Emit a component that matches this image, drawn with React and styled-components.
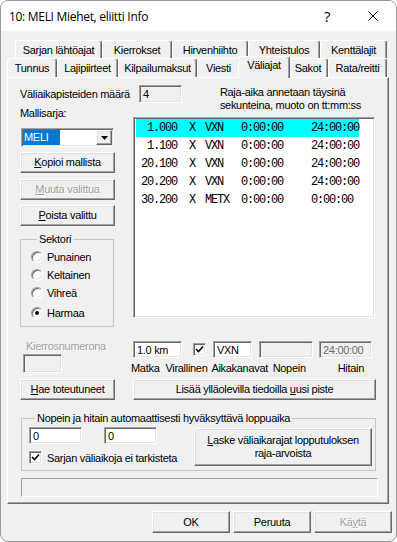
import React from 'react';
import styled, { createGlobalStyle, css } from 'styled-components';

const GlobalStyle = createGlobalStyle`
  html, body { margin: 0; padding: 0; background: #ffffff; }
  body { font-family: "Liberation Sans", Arial, sans-serif; font-size: 11px; color: #000; }
  * { box-sizing: border-box; }
`;

const sunken = css`
  border: 1px solid;
  border-color: #a0a0a0 #ffffff #ffffff #a0a0a0;
  box-shadow: inset 1px 1px 0 #696969, inset -1px -1px 0 #e3e3e3;
`;

const raised = css`
  border: 1px solid;
  border-color: #ffffff #696969 #696969 #ffffff;
  box-shadow: inset -1px -1px 0 #a0a0a0, inset 1px 1px 0 #e3e3e3;
`;

const Window = styled.div`
  width: 397px;
  height: 542px;
  border: 1px solid #9a9a9a;
  border-radius: 8px;
  overflow: hidden;
  background: #f0f0f0;
  display: flex;
  flex-direction: column;
  letter-spacing: -0.3px;
`;

const TitleBar = styled.div`
  height: 30px;
  background: #ffffff;
  display: flex;
  align-items: center;
  padding-left: 8px;
`;

const TitleText = styled.div`
  font-family: "Segoe UI", "Open Sans", "Noto Sans", sans-serif;
  font-size: 12px;
  flex: 1;
`;

const CaptionButton = styled.div`
  width: 46px;
  height: 30px;
  display: flex;
  align-items: center;
  justify-content: center;
  font-family: "Open Sans", "Noto Sans", sans-serif;
  font-size: 15px;
  font-weight: 400;
`;

const Body = styled.div`
  flex: 1;
  padding: 9px 0 0 6px;
  display: flex;
  flex-direction: column;
`;

const TabRow = styled.div`
  display: flex;
  margin-left: ${p => p.$indent}px;
  height: ${p => p.$h}px;
  position: relative;
  z-index: ${p => p.$z};
`;

const Tab = styled.div`
  width: ${p => p.$w}px;
  height: ${p => p.$h}px;
  border-top: 1px solid #ffffff;
  border-left: 1px solid #ffffff;
  border-right: 1px solid #696969;
  box-shadow: inset -1px 0 0 #a0a0a0;
  border-radius: 3px 3px 0 0;
  background: #f0f0f0;
  display: flex;
  justify-content: center;
  align-items: center;
  white-space: nowrap;
  ${p => p.$selected && css`
    width: ${p.$w + 4}px;
    height: ${p.$h + 3}px;
    margin: -2px -2px -1px;
    align-items: flex-start;
    padding-top: 2px;
    line-height: 13px;
    position: relative;
    z-index: 2;
  `}
`;

const Panel = styled.div`
  width: 382px;
  height: 427px;
  border: 1px solid;
  border-color: #ffffff #696969 #696969 #ffffff;
  box-shadow: inset -1px -1px 0 #a0a0a0;
  padding: 7px 0 0 12px;
  display: flex;
  flex-direction: column;
`;

const MainGrid = styled.div`
  display: grid;
  grid-template-columns: 113px 243px;
  align-items: start;
`;

const CountRow = styled.div`
  grid-column: 1 / span 2;
  display: flex;
  align-items: flex-start;
  height: 22px;
`;

const Text = styled.div`
  line-height: ${p => p.$lh || 13}px;
  margin-top: ${p => p.$mt || 0}px;
  margin-left: ${p => p.$ml || 0}px;
  white-space: nowrap;
  color: ${p => (p.$disabled ? '#a0a0a0' : '#000')};
  ${p => p.$disabled && 'text-shadow: 1px 1px 0 #fff;'}
`;

const TextBox = styled.div`
  ${sunken};
  width: ${p => p.$w}px;
  height: ${p => p.$h}px;
  margin-top: ${p => p.$mt || 0}px;
  margin-left: ${p => p.$ml || 0}px;
  background: ${p => (p.$readonly ? '#f0f0f0' : '#ffffff')};
  color: ${p => (p.$grey ? '#6d6d6d' : '#000')};
  padding: 0 0 0 3px;
  display: flex;
  align-items: center;
  white-space: nowrap;
  flex-shrink: 0;
`;

const LeftStack = styled.div`
  display: flex;
  flex-direction: column;
  align-items: flex-start;
  margin-top: ${p => p.$mt || 0}px;
`;

const RightStack = styled.div`
  margin-top: ${p => p.$mt || 0}px;
`;

const ComboBox = styled.div`
  ${sunken};
  background: #ffffff;
  width: 93px;
  height: 19px;
  margin: 8px 0 0 1px;
  padding: 1px;
  display: flex;
  align-items: center;
`;

const Selection = styled.span`
  width: 37px;
  height: 15px;
  background: #0078d7;
  color: #ffffff;
  padding-left: 1px;
  line-height: 15px;
`;

const DropButton = styled.div`
  ${raised};
  background: #f0f0f0;
  width: 16px;
  height: 15px;
  margin-left: auto;
  display: flex;
  align-items: center;
  justify-content: center;
`;

const Button = styled.div`
  ${raised};
  background: #f0f0f0;
  width: ${p => p.$w}px;
  height: ${p => p.$h || 21}px;
  margin-top: ${p => p.$mt || 0}px;
  margin-left: ${p => (p.$push ? 'auto' : `${p.$ml || 0}px`)};
  display: flex;
  align-items: center;
  justify-content: center;
  text-align: center;
  line-height: 13px;
  white-space: nowrap;
  flex-shrink: 0;
  color: ${p => (p.$disabled ? '#a0a0a0' : '#000')};
  ${p => p.$disabled && 'text-shadow: 1px 1px 0 #fff;'}
`;

const U = styled.span`
  text-decoration: underline;
  text-underline-offset: 1px;
`;

const GroupBox = styled.fieldset`
  margin: ${p => p.$mt || 0}px 0 0 ${p => p.$ml || 0}px;
  padding: ${p => p.$pad};
  width: ${p => p.$w}px;
  border: 1px solid #c6c6c6;
  min-width: 0;
`;

const Legend = styled.legend`
  padding: 0 2px;
  margin-left: 6px;
  line-height: 13px;
  white-space: nowrap;
`;

const RadioRow = styled.div`
  display: flex;
  align-items: center;
  height: 18px;
  margin-top: ${p => p.$mt || 0}px;
  gap: 4px;
`;

const RadioCircle = styled.span`
  width: 12px;
  height: 12px;
  border-radius: 50%;
  border: 1px solid;
  border-color: #a0a0a0 #ffffff #ffffff #a0a0a0;
  box-shadow: inset 1px 1px 0 #696969, inset -1px -1px 0 #e3e3e3;
  background: #ffffff;
  display: flex;
  align-items: center;
  justify-content: center;
  &::after {
    content: '';
    width: 4px;
    height: 4px;
    border-radius: 50%;
    background: ${p => (p.$checked ? '#000' : 'transparent')};
  }
`;

const ListBox = styled.div`
  ${sunken};
  background: #ffffff;
  width: 242px;
  height: 201px;
  margin-top: 10px;
  padding: 1px 0 0 2px;
  font-family: "Liberation Mono", "Courier New", monospace;
  font-size: 12px;
  letter-spacing: -1.2px;
`;

const ListRow = styled.div`
  display: flex;
  width: 223px;
  height: 18px;
  align-items: center;
  background: ${p => (p.$selected ? '#00ffff' : 'transparent')};
`;

const Cell = styled.div`
  width: ${p => p.$w}px;
  padding-left: ${p => p.$pl || 0}px;
  text-align: ${p => p.$align || 'left'};
  white-space: pre;
`;

const FieldsRow = styled.div`
  display: flex;
  align-items: center;
  margin-top: 1px;
`;

const CheckBox = styled.span`
  width: 13px;
  height: 13px;
  margin-left: ${p => p.$ml || 0}px;
  border: 1px solid;
  border-color: #a0a0a0 #ffffff #ffffff #a0a0a0;
  box-shadow: inset 1px 1px 0 #696969, inset -1px -1px 0 #e3e3e3;
  background: #ffffff;
  display: flex;
  align-items: center;
  justify-content: center;
  flex-shrink: 0;
`;

const LabelsRow = styled.div`
  display: flex;
  margin: 4px 0 0 -2px;
  line-height: 12px;
`;

const FieldLabel = styled.div`
  width: ${p => p.$w}px;
  white-space: nowrap;
`;

const GroupContent = styled.div`
  display: flex;
  align-items: flex-start;
`;

const CheckRow = styled.div`
  display: flex;
  align-items: center;
  gap: 5px;
  margin-top: 7px;
  white-space: nowrap;
`;

const InputsRow = styled.div`
  display: flex;
`;

const StatusBox = styled.div`
  width: 357px;
  height: 19px;
  margin: 7px 0 0 1px;
  border: 1px solid;
  border-color: #a0a0a0 #ffffff #ffffff #a0a0a0;
`;

const Footer = styled.div`
  display: flex;
  justify-content: flex-end;
  gap: 3px;
  margin-top: 7px;
  padding-right: 4px;
`;

const Check = () => (
  <svg width="9" height="9" viewBox="0 0 9 9">
    <path d="M1 4 L3.5 6.5 L8 1.5" stroke="#000" strokeWidth="1.6" fill="none" />
  </svg>
);

const row1 = [
  { label: 'Sarjan lähtöajat', w: 87 },
  { label: 'Kierrokset', w: 70 },
  { label: 'Hirvenhiihto', w: 76 },
  { label: 'Yhteistulos', w: 72 },
  { label: 'Kenttälajit', w: 67 },
];

const row2 = [
  { label: 'Tunnus', w: 50 },
  { label: 'Lajipiirteet', w: 61 },
  { label: 'Kilpailumaksut', w: 79 },
  { label: 'Viesti', w: 43 },
  { label: 'Väliajat', w: 48, selected: true },
  { label: 'Sakot', w: 40 },
  { label: 'Rata/reitti', w: 59 },
];

const points = [
  { km: '1.000', ch: 'VXN', fast: '0:00:00', slow: '24:00:00', selected: true },
  { km: '1.100', ch: 'VXN', fast: '0:00:00', slow: '24:00:00' },
  { km: '20.100', ch: 'VXN', fast: '0:00:00', slow: '24:00:00' },
  { km: '20.200', ch: 'VXN', fast: '0:00:00', slow: '24:00:00' },
  { km: '30.200', ch: 'METX', fast: '0:00:00', slow: '0:00:00' },
];

const sectors = [
  { label: 'Punainen' },
  { label: 'Keltainen' },
  { label: 'Vihreä' },
  { label: 'Harmaa', checked: true, mt: 2 },
];

export default function App() {
  return (
    <>
      <GlobalStyle />
      <Window>
        <TitleBar>
          <TitleText>10: MELI Miehet, eliitti Info</TitleText>
          <CaptionButton>?</CaptionButton>
          <CaptionButton>
            <svg width="10" height="10" viewBox="0 0 10 10">
              <path d="M0.5 0.5 L9.5 9.5 M9.5 0.5 L0.5 9.5" stroke="#000" strokeWidth="1" />
            </svg>
          </CaptionButton>
        </TitleBar>
        <Body>
          <TabRow $indent={8} $h={18} $z={1}>
            {row1.map(t => (
              <Tab key={t.label} $w={t.w} $h={18}>{t.label}</Tab>
            ))}
          </TabRow>
          <TabRow $indent={0} $h={19} $z={2}>
            {row2.map(t => (
              <Tab key={t.label} $w={t.w} $h={19} $selected={t.selected}>{t.label}</Tab>
            ))}
          </TabRow>
          <Panel>
            <MainGrid>
              <CountRow>
                <Text $lh={18}>Väliaikapisteiden määrä</Text>
                <TextBox $w={43} $h={18} $ml={9} $readonly>4</TextBox>
                <Text $mt={1} $ml={38}>
                  Raja-aika annetaan täysinä
                  <br />
                  sekunteina, muoto on tt:mm:ss
                </Text>
              </CountRow>

              <LeftStack>
                <Text>Mallisarja:</Text>
                <ComboBox>
                  <Selection>MELI</Selection>
                  <DropButton>
                    <svg width="7" height="4" viewBox="0 0 7 4">
                      <path d="M0 0 L7 0 L3.5 4 Z" fill="#000" />
                    </svg>
                  </DropButton>
                </ComboBox>
                <Button $w={95} $mt={5}><span><U>K</U>opioi mallista</span></Button>
                <Button $w={95} $mt={6} $disabled><span><U>M</U>uuta valittua</span></Button>
                <Button $w={95} $mt={5}><span><U>P</U>oista valittu</span></Button>
                <GroupBox $w={94} $mt={7} $pad="2px 0 4px 10px">
                  <Legend>Sektori</Legend>
                  {sectors.map(s => (
                    <RadioRow key={s.label} $mt={s.mt}>
                      <RadioCircle $checked={s.checked} />
                      <span>{s.label}</span>
                    </RadioRow>
                  ))}
                </GroupBox>
              </LeftStack>

              <ListBox>
                {points.map(p => (
                  <ListRow key={p.km} $selected={p.selected}>
                    <Cell $w={41} $align="right">{p.km}</Cell>
                    <Cell $w={28} $pl={12}>X</Cell>
                    <Cell $w={36}>{p.ch}</Cell>
                    <Cell $w={70}>{p.fast}</Cell>
                    <Cell $w={48}>{p.slow}</Cell>
                  </ListRow>
                ))}
              </ListBox>

              <LeftStack $mt={13}>
                <Text $lh={12} $ml={6} $disabled>Kierrosnumerona</Text>
                <TextBox $w={39} $h={19} $mt={2} $ml={3} $readonly />
              </LeftStack>

              <RightStack $mt={13}>
                <FieldsRow>
                  <TextBox $w={49} $h={17}>1.0 km</TextBox>
                  <CheckBox $ml={11}><Check /></CheckBox>
                  <TextBox $w={39} $h={17} $ml={7}>VXN</TextBox>
                  <TextBox $w={54} $h={17} $ml={7} $readonly />
                  <TextBox $w={53} $h={17} $ml={6} $readonly $grey>24:00:00</TextBox>
                </FieldsRow>
                <LabelsRow>
                  <FieldLabel $w={36}>Matka</FieldLabel>
                  <FieldLabel $w={48}>Virallinen</FieldLabel>
                  <FieldLabel $w={64}>Aikakanavat</FieldLabel>
                  <FieldLabel $w={68}>Nopein</FieldLabel>
                  <FieldLabel $w={40}>Hitain</FieldLabel>
                </LabelsRow>
              </RightStack>

              <Button $w={95} $mt={5}><span><U>H</U>ae toteutuneet</span></Button>
              <Button $w={243} $mt={5}><span>Lisää ylläolevilla tiedoilla <U>u</U>usi piste</span></Button>
            </MainGrid>

            <GroupBox $w={355} $mt={12} $ml={1} $pad="2px 3px 4px 7px">
              <Legend>Nopein ja hitain automaattisesti hyväksyttävä loppuaika</Legend>
              <GroupContent>
                <div>
                  <InputsRow>
                    <TextBox $w={53} $h={17}>0</TextBox>
                    <TextBox $w={53} $h={17} $ml={22}>0</TextBox>
                  </InputsRow>
                  <CheckRow>
                    <CheckBox><Check /></CheckBox>
                    <span>Sarjan väliaikoja ei tarkisteta</span>
                  </CheckRow>
                </div>
                <Button $w={178} $h={38} $mt={1} $push>
                  <span><U>L</U>aske väliaikarajat lopputuloksen<br />raja-arvoista</span>
                </Button>
              </GroupContent>
            </GroupBox>

            <StatusBox />
          </Panel>
          <Footer>
            <Button $w={78} $h={22}>OK</Button>
            <Button $w={78} $h={22}>Peruuta</Button>
            <Button $w={78} $h={22} $disabled><span>Kä<U>y</U>tä</span></Button>
          </Footer>
        </Body>
      </Window>
    </>
  );
}
